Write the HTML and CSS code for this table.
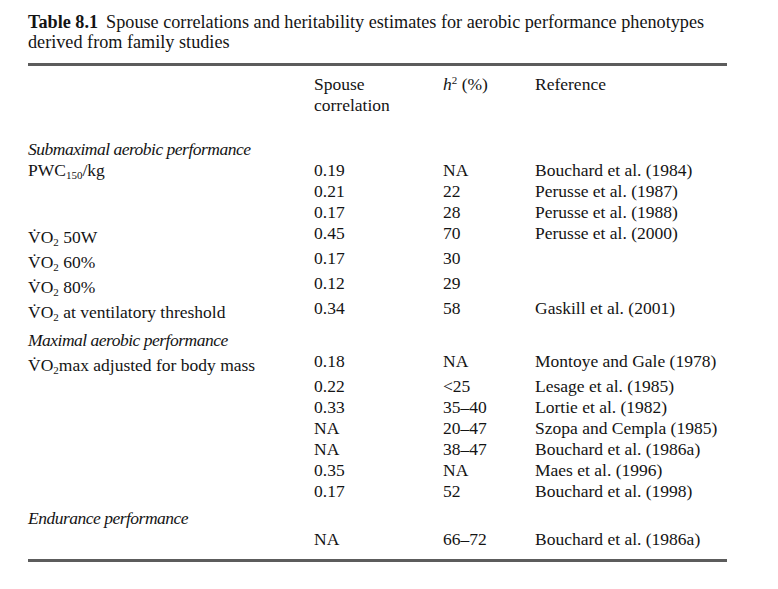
FILE: index.html
```html
<!DOCTYPE html>
<html lang="en">
<head>
<meta charset="utf-8">
<title>Table 8.1</title>
<link rel="stylesheet" href="styles.css">
</head>
<body>
<div class="page">
  <p class="caption"><b class="tnum">Table 8.1</b><span class="ctext">Spouse correlations and heritability estimates for aerobic performance phenotypes</span><br><span class="ctext">derived from family studies</span></p>
  <table class="tbl">
    <colgroup>
      <col class="c1"><col class="c2"><col class="c3"><col class="c4">
    </colgroup>
    <thead>
      <tr>
        <th></th>
        <th>Spouse<br>correlation</th>
        <th><i>h</i><sup>2</sup> (%)</th>
        <th>Reference</th>
      </tr>
    </thead>
    <tbody>
      <tr class="section first"><td colspan="4"><i>Submaximal aerobic performance</i></td></tr>
      <tr><td>PWC<sub>150</sub>/kg</td><td>0.19</td><td>NA</td><td>Bouchard et al. (1984)</td></tr>
      <tr><td></td><td>0.21</td><td>22</td><td>Perusse et al. (1987)</td></tr>
      <tr><td></td><td>0.17</td><td>28</td><td>Perusse et al. (1988)</td></tr>
      <tr class="vo"><td class="lab">V&#775;O<sub>2</sub> 50W</td><td>0.45</td><td>70</td><td>Perusse et al. (2000)</td></tr>
      <tr class="vo"><td class="lab">V&#775;O<sub>2</sub> 60%</td><td>0.17</td><td>30</td><td></td></tr>
      <tr class="vo"><td class="lab">V&#775;O<sub>2</sub> 80%</td><td>0.12</td><td>29</td><td></td></tr>
      <tr class="vo"><td class="lab">V&#775;O<sub>2</sub> at ventilatory threshold</td><td>0.34</td><td>58</td><td>Gaskill et al. (2001)</td></tr>
      <tr class="section gap7"><td colspan="4"><i>Maximal aerobic performance</i></td></tr>
      <tr class="vo"><td class="lab">V&#775;O<sub>2</sub>max adjusted for body mass</td><td>0.18</td><td>NA</td><td>Montoye and Gale (1978)</td></tr>
      <tr><td></td><td>0.22</td><td>&lt;25</td><td>Lesage et al. (1985)</td></tr>
      <tr><td></td><td>0.33</td><td>35–40</td><td>Lortie et al. (1982)</td></tr>
      <tr><td></td><td>NA</td><td>20–47</td><td>Szopa and Cempla (1985)</td></tr>
      <tr><td></td><td>NA</td><td>38–47</td><td>Bouchard et al. (1986a)</td></tr>
      <tr><td></td><td>0.35</td><td>NA</td><td>Maes et al. (1996)</td></tr>
      <tr><td></td><td>0.17</td><td>52</td><td>Bouchard et al. (1998)</td></tr>
      <tr class="section gap6"><td colspan="4"><i>Endurance performance</i></td></tr>
      <tr class="last"><td></td><td>NA</td><td>66–72</td><td>Bouchard et al. (1986a)</td></tr>
    </tbody>
  </table>
</div>
</body>
</html>
```

FILE: styles.css
```css
html, body {
  margin: 0;
  padding: 0;
  background: #ffffff;
}
body {
  font-family: "Liberation Serif", "Times New Roman", serif;
  font-size: 17.5px;
  color: #141414;
}
.page {
  padding: 12px 0 0 28px;
  width: 699px;
}
.caption {
  margin: 0;
  font-size: 18.2px;
  line-height: 20px;
  white-space: nowrap;
}
.caption .tnum {
  font-weight: bold;
  margin-right: 8px;
}
.tbl {
  margin-top: 11px;
  width: 699px;
  border-collapse: collapse;
  table-layout: fixed;
  border-top: 3px solid #5c5c5c;
  border-bottom: 3px solid #5c5c5c;
}
.c1 { width: 286px; }
.c2 { width: 129px; }
.c3 { width: 92px; }
.c4 { width: 192px; }
.tbl th, .tbl td {
  padding: 0;
  text-align: left;
  vertical-align: top;
  font-weight: normal;
  line-height: 21px;
  white-space: nowrap;
}
.tbl thead th {
  padding-top: 8px;
  padding-bottom: 0;
}
.tbl sub {
  font-size: 11px;
  line-height: 0;
  vertical-align: -3px;
}
.tbl sup {
  font-size: 11px;
  line-height: 0;
  vertical-align: 6px;
}
.section i {
  letter-spacing: -0.5px;
}
.section.first td { padding-top: 23px; }
.section.gap7 td { padding-top: 7px; }
.section.gap6 td { padding-top: 6px; }
.vo td.lab { padding-top: 4px; }
.last td { padding-bottom: 9px; }
```
